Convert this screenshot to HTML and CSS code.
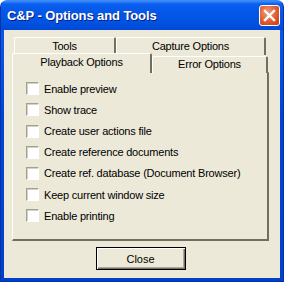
FILE: index.html
```html
<!DOCTYPE html>
<html lang="en">
<head>
    <meta charset="UTF-8">
    <title>C&amp;P - Options and Tools</title>
    <link rel="stylesheet" href="styles.css">
</head>
<body>
<div class="window">
    <div class="titlebar">
        <span class="title">C&amp;P - Options and Tools</span>
        <span class="close-x">
            <svg width="13" height="13" viewBox="0 0 13 13">
                <path d="M2 2 L11 11 M11 2 L2 11" stroke="#fff" stroke-width="2.4" stroke-linecap="square"/>
            </svg>
        </span>
    </div>

    <div class="client">
        <!-- Tab strip: back row, then front row -->
        <div class="tab-row back">
            <div class="tab tools">Tools</div>
            <div class="tab capture">Capture Options</div>
        </div>
        <div class="tab-row front">
            <div class="tab playback active">Playback Options</div>
            <div class="tab errors">Error Options</div>
        </div>

        <div class="panel">
            <label class="option"><span class="check"></span>Enable preview</label>
            <label class="option"><span class="check"></span>Show trace</label>
            <label class="option"><span class="check"></span>Create user actions file</label>
            <label class="option"><span class="check"></span>Create reference documents</label>
            <label class="option"><span class="check"></span>Create ref. database (Document Browser)</label>
            <label class="option"><span class="check"></span>Keep current window size</label>
            <label class="option"><span class="check"></span>Enable printing</label>
        </div>

        <div class="footer">
            <button class="btn">Close</button>
        </div>
    </div>
</div>
</body>
</html>
```

FILE: styles.css
```css
:root {
    --face: #ece9d8;
    --shadow: #aca899;
    --dark: #716f64;
}

body {
    margin: 0;
    font-family: Tahoma, "Liberation Sans", Arial, sans-serif;
    font-size: 11px;
    letter-spacing: -0.2px;
    color: #000;
    background: #fff;
}

.window {
    width: 284px;
    height: 282px;
    box-sizing: border-box;
    background: linear-gradient(#0a5ef0, #0046d5 40%, #0041cc);
    border-radius: 7px 7px 0 0;
    border: 1px solid #0831a8;
    border-top-color: #3d8af7;
    display: flex;
    flex-direction: column;
}

.titlebar {
    height: 29px;
    display: flex;
    align-items: center;
    justify-content: space-between;
    padding: 0 3px 0 6px;
    background: linear-gradient(#3a8cf8 0, #0b5ff0 3px, #0558e8 10px, #0152e0 22px, #0149d6 29px);
    border-radius: 6px 6px 0 0;
}

.title {
    color: #fff;
    font-family: "Liberation Sans", Arial, sans-serif;
    font-weight: bold;
    font-size: 13px;
    letter-spacing: -0.1px;
    text-shadow: 1px 1px 0 #0a1e7a;
}

.close-x {
    width: 19px;
    height: 19px;
    border: 1px solid #fff;
    border-radius: 3px;
    background: radial-gradient(circle at 40% 35%, #f29c7c, #e25b2f 55%, #c3391a);
    display: flex;
    align-items: center;
    justify-content: center;
}

.client {
    flex: 1;
    margin: 0 3px 3px;
    background: var(--face);
    padding: 7px 0 0 8px;
}

.tab-row {
    display: flex;
}

.tab {
    box-sizing: border-box;
    background: var(--face);
    border-top: 1px solid #fff;
    border-left: 1px solid #fff;
    border-right: 2px solid var(--dark);
    border-radius: 2px 2px 0 0;
    text-align: center;
}

.back {
    padding-left: 2px;
}

.back .tab {
    height: 18px;
    padding-top: 2px;
}

.tools { width: 102px; }
.capture { width: 150px; }

.front {
    margin-top: -1px;
}

.front .tab {
    height: 19px;
    padding-top: 2px;
    position: relative;
}

.playback {
    width: 140px;
    z-index: 2;
    height: 20px !important;
    margin-top: -1px;
}

.errors {
    width: 116px;
    margin-top: 2px;
    height: 17px !important;
    padding-top: 1px !important;
}

.panel {
    width: 257px;
    height: 169px;
    box-sizing: border-box;
    margin-top: -1px;
    border-top: 1px solid #fff;
    border-left: 1px solid #fff;
    border-right: 2px solid var(--dark);
    border-bottom: 2px solid var(--dark);
    padding: 9px 0 0 13px;
    display: flex;
    flex-direction: column;
    gap: 7.67px;
}

.option {
    display: flex;
    align-items: center;
    height: 13.5px;
    gap: 5px;
}

.check {
    width: 13px;
    height: 13px;
    box-sizing: border-box;
    background: #fff;
    border: 1px solid;
    border-color: #a2a08f #fff #fff #a2a08f;
    box-shadow: inset 1px 1px 0 #d5d2c3;
    flex: none;
}

.footer {
    display: flex;
    justify-content: center;
    padding: 6px 0 0;
    width: 257px;
}

.btn {
    width: 90px;
    height: 23px;
    font: inherit;
    background: var(--face);
    border: 1px solid #000;
    box-shadow: inset 1px 1px 0 #fff, inset -1px -1px 0 var(--dark), inset -2px -2px 0 var(--shadow);
    padding: 0;
}
```
